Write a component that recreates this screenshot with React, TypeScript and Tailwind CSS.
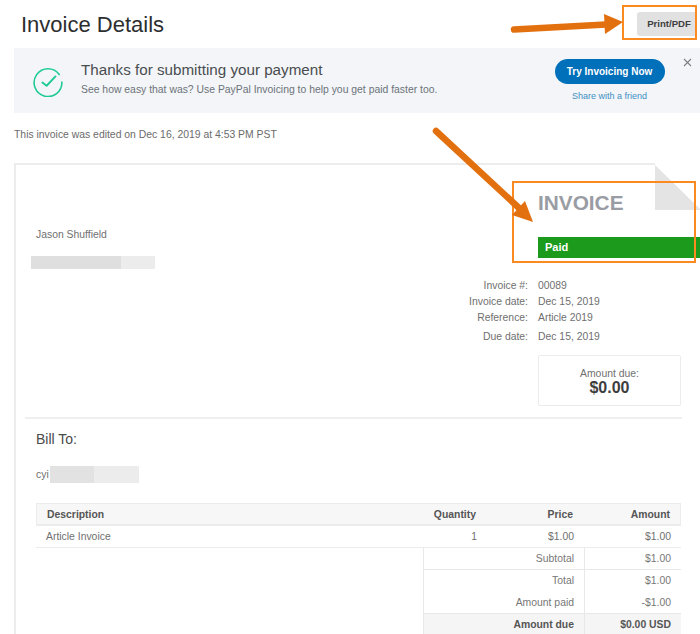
const font = { fontFamily: '"Liberation Sans", Arial, sans-serif' };

function Redacted({ w, h, mid, midW }: { w: string; h: string; mid: string; midW: string }) {
  return (
    <div className={`${w} ${h} bg-[#ececec] flex`}>
      <div className={`${midW} ${mid} h-full`} />
    </div>
  );
}

function Arrow({ d, head }: { d: string; head: string }) {
  return (
    <svg className="absolute left-0 top-0 pointer-events-none" width="700" height="634" viewBox="0 0 700 634" fill="none">
      <path d={d} stroke="#e3700f" strokeWidth="6.5" strokeLinecap="round" />
      <polygon points={head} fill="#e3700f" />
    </svg>
  );
}

function MetaRow({ label, value, cls }: { label: string; value: string; cls: string }) {
  return (
    <div className={`flex ${cls}`}>
      <div className="w-[88px] text-right">{label}</div>
      <div className="ml-[10px]">{value}</div>
    </div>
  );
}

function TotalRow({ label, value, cls, border }: { label: string; value: string; cls?: string; border?: boolean }) {
  return (
    <div className={`flex h-[22px] items-center border-l border-[#e8e8e8] ${border ? 'border-b' : ''} ${cls || ''}`}>
      <div className="w-[161px] text-right pr-[10px] h-full flex items-center justify-end border-r border-[#e8e8e8]">{label}</div>
      <div className="flex-1 text-right pr-[10px]">{value}</div>
    </div>
  );
}

export default function App() {
  return (
    <div className="relative w-[700px] h-[634px] overflow-hidden bg-white text-[#6b6b6b]" style={font}>
      <header className="flex items-center justify-between h-[48px] pl-[21px] pr-[3px]">
        <h1 className="text-[22px] text-[#2c2e2f] leading-none mt-[2px]">Invoice Details</h1>
        <button className="w-[60px] h-[24px] bg-[#e1e1e1] rounded-[3px] text-[9.6px] font-bold text-[#3f3f3f] pl-[4px]">Print/PDF</button>
      </header>

      <section className="relative ml-[14px] h-[65px] bg-[#f3f5f8] flex items-center pl-[19px]">
        <svg width="30" height="30" viewBox="0 0 32 32" fill="none" className="shrink-0 mt-[3px]">
          <path d="M28 8A14.8 14.8 0 1 0 30.8 16" stroke="#1ecb92" strokeWidth="1.7" strokeLinecap="round" />
          <path d="M10 16.5l4.5 3.5L24 10" stroke="#1ecb92" strokeWidth="2" strokeLinecap="round" strokeLinejoin="round" />
        </svg>
        <div className="ml-[18px] flex-1 -mt-[1px]">
          <div className="text-[15.2px] leading-[20px] text-[#4a4d50] -mt-[3px]">Thanks for submitting your payment</div>
          <div className="text-[10.4px] leading-[14px] mt-[3px] text-[#6c7378]">See how easy that was? Use PayPal Invoicing to help you get paid faster too.</div>
        </div>
        <div className="w-[111px] mr-[35px] flex flex-col items-center -mt-[1px]">
          <button className="w-[110px] h-[25px] rounded-full bg-[#0070ba] text-white text-[10px] font-bold">Try Invoicing Now</button>
          <a className="text-[9px] text-[#3f8fc4] mt-[6px] leading-[12px]">Share with a friend</a>
        </div>
        <svg className="absolute right-[8px] top-[10px]" width="9" height="9" viewBox="0 0 9 9" fill="none">
          <path d="M1 1l7 7M8 1l-7 7" stroke="#7b7f83" strokeWidth="1.1" />
        </svg>
      </section>

      <p className="ml-[14px] mt-[15px] text-[10.4px] leading-[14px] text-[#6b6b6b]">This invoice was edited on Dec 16, 2019 at 4:53 PM PST</p>

      <main className="relative ml-[14px] mt-[21px] border-l-2 border-t-2 border-[#ececec] h-[480px]">
        <div className="absolute -top-[2px] -right-[1px] w-[46px] h-[47px] bg-white">
          <svg width="46" height="47" viewBox="0 0 46 47">
            <polygon points="0,2 46,47 0,47" fill="#e4e4e4" />
          </svg>
        </div>

        <div className="flex h-[252px]">
          <div className="pl-[20px] pt-[63px] w-[522px]">
            <div className="text-[10.4px] leading-[14px] text-[#707070]">Jason Shuffield</div>
            <div className="-ml-[5px] mt-[14px]">
              <Redacted w="w-[124px]" h="h-[13px]" mid="bg-[#e0dfdf]" midW="w-[90px]" />
            </div>
          </div>
          <div className="flex-1 pt-[25px]">
            <div className="text-[20.8px] font-bold leading-[25px] text-[#9a9ca3]">INVOICE</div>
            <div className="mt-[22px] h-[21px] bg-[#1c9a1c] text-white text-[11px] font-bold leading-[21px] pl-[7px]">Paid</div>
            <div className="-ml-[98px] mt-[20px] text-[10.4px] text-[#6f6f6f]">
              <MetaRow label="Invoice #:" value="00089" cls="h-[16px] leading-[16px]" />
              <MetaRow label="Invoice date:" value="Dec 15, 2019" cls="h-[16px] leading-[16px]" />
              <MetaRow label="Reference:" value="Article 2019" cls="h-[16px] leading-[16px]" />
              <MetaRow label="Due date:" value="Dec 15, 2019" cls="h-[22px] leading-[22px]" />
            </div>
            <div className="mt-[7px] w-[143px] h-[51px] border border-[#ececec] rounded-[2px] flex flex-col items-center justify-center">
              <div className="text-[10.4px] leading-[11px] text-[#6f6f6f] mt-[4px]">Amount due:</div>
              <div className="text-[16px] font-bold leading-[18px] text-[#3e3e3e]">$0.00</div>
            </div>
          </div>
        </div>

        <div className="ml-[9px] mr-[18px] border-t-2 border-[#efefef]">
          <h2 className="ml-[11px] mt-[10px] text-[14px] leading-[20px] text-[#4a4a4a]">Bill To:</h2>
          <div className="ml-[11px] mt-[17px] h-[17px] flex items-center">
            <span className="text-[10.4px] text-[#6f6f6f]">cyi</span>
            <div className="ml-[1px]">
              <Redacted w="w-[89px]" h="h-[17px]" mid="bg-[#e2e2e2]" midW="w-[44px]" />
            </div>
          </div>

          <div className="ml-[11px] mr-[1px] mt-[20px] text-[10.4px]">
            <div className="flex h-[23px] items-center bg-[#f7f7f7] border border-[#ececec] border-b-2 font-bold text-[#555] pt-[1px]">
              <div className="flex-1 pl-[10px]">Description</div>
              <div className="w-[69px] text-right">Quantity</div>
              <div className="w-[97px] text-right">Price</div>
              <div className="w-[107px] text-right pr-[10px]">Amount</div>
            </div>
            <div className="flex h-[22px] items-center border-b border-[#ececec] text-[#6f6f6f]">
              <div className="flex-1 pl-[10px]">Article Invoice</div>
              <div className="w-[69px] text-right">1</div>
              <div className="w-[97px] text-right">$1.00</div>
              <div className="w-[107px] text-right pr-[10px]">$1.00</div>
            </div>
            <div className="ml-[387px] text-[#777]">
              <TotalRow label="Subtotal" value="$1.00" border />
              <TotalRow label="Total" value="$1.00" />
              <TotalRow label="Amount paid" value="-$1.00" border />
              <TotalRow label="Amount due" value="$0.00 USD" cls="bg-[#f5f5f5] font-bold text-[#555]" />
            </div>
          </div>
        </div>
      </main>

      {/* annotations on top of the screenshot */}
      <div className="absolute left-[622px] top-[5px] w-[75px] h-[35px] border-2 border-[#fb8a20]" />
      <div className="absolute left-[512px] top-[181px] w-[184px] h-[82px] border-2 border-[#fb8a20]" />
      <Arrow d="M514 29.5L606 24.5" head="604,14 623,22 605,34" />
      <Arrow d="M436 131L519 208" head="525,201 533,222 512,215" />
    </div>
  );
}
